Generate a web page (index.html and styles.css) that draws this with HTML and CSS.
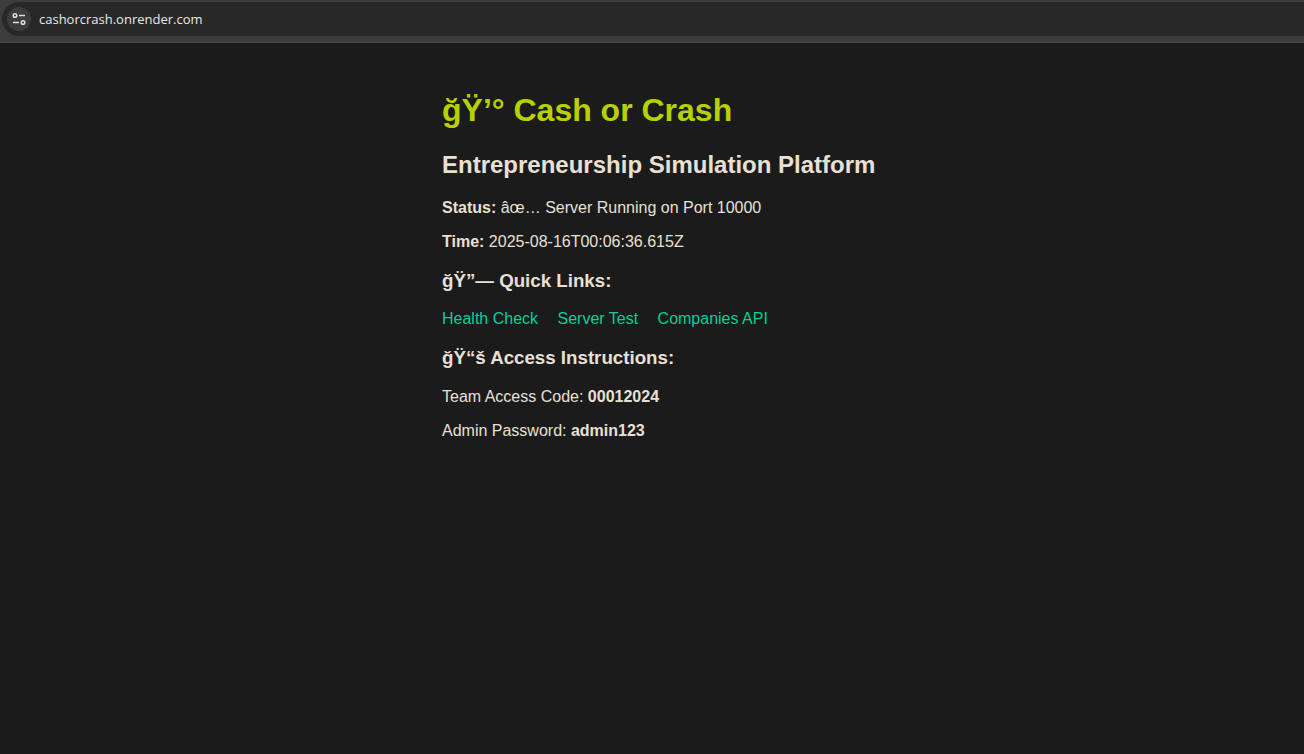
FILE: index.html
```html
<!DOCTYPE html>
<html lang="en">
<head>
  <meta charset="utf-8">
  <title>Cash or Crash</title>
  <link rel="stylesheet" href="styles.css">
</head>
<body>
  <header class="toolbar">
    <div class="address-bar">
      <button class="site-info" type="button" aria-label="View site information">
        <svg width="14" height="14" viewBox="0 0 14 14" fill="none" stroke="#dedede" stroke-width="1.5" aria-hidden="true">
          <circle cx="3" cy="3.5" r="1.8"/>
          <path d="M7 3.5h6M1 10.5h6"/>
          <circle cx="11" cy="10.5" r="1.8"/>
        </svg>
      </button>
      <input class="url" type="text" aria-label="Address" value="cashorcrash.onrender.com">
    </div>
  </header>
  <main class="page">
    <h1 class="title">ğŸ’° Cash or Crash</h1>
    <h2 class="subtitle">Entrepreneurship Simulation Platform</h2>
    <p><strong>Status:</strong> âœ… Server Running on Port 10000</p>
    <p><strong>Time:</strong> 2025-08-16T00:06:36.615Z</p>
    <h3>ğŸ”— Quick Links:</h3>
    <nav>
      <a class="link" href="#health">Health Check</a>
      <a class="link" href="#test">Server Test</a>
      <a class="link" href="#companies">Companies API</a>
    </nav>
    <h3>ğŸ“š Access Instructions:</h3>
    <p>Team Access Code: <strong>00012024</strong></p>
    <p>Admin Password: <strong>admin123</strong></p>
  </main>
</body>
</html>
```
FILE: styles.css
```css
body {
  margin: 0;
  background: #1b1b1b;
  color: #e8e0d5;
  font-family: "Liberation Sans", Arial, sans-serif;
  font-size: 16px;
}

.toolbar {
  padding: 2px 0 6px 2px;
  background: #3c3c3c;
  border-bottom: 1px solid #484a48;
}

.address-bar {
  display: flex;
  align-items: center;
  gap: 8px;
  height: 34px;
  padding-left: 5px;
  background: #282828;
  border-radius: 17px 0 0 17px;
}

.site-info {
  display: flex;
  align-items: center;
  justify-content: center;
  flex: none;
  width: 24px;
  height: 24px;
  padding: 0;
  border: 0;
  border-radius: 50%;
  background: #3c3c3c;
}

.url {
  flex: 1;
  min-width: 0;
  padding: 0;
  border: 0;
  outline: 0;
  background: transparent;
  color: #e8e8e8;
  font: 13px "Open Sans", "Noto Sans", sans-serif;
}

.page {
  margin-left: calc(50% - 210px);
  padding: 49px 20px 20px 0;
}

.title {
  margin: 0 0 22px;
  color: #b8d000;
}

.subtitle {
  margin: 20px 0;
}

.link {
  margin-right: 15px;
  color: #00d09c;
  text-decoration: none;
}
```
